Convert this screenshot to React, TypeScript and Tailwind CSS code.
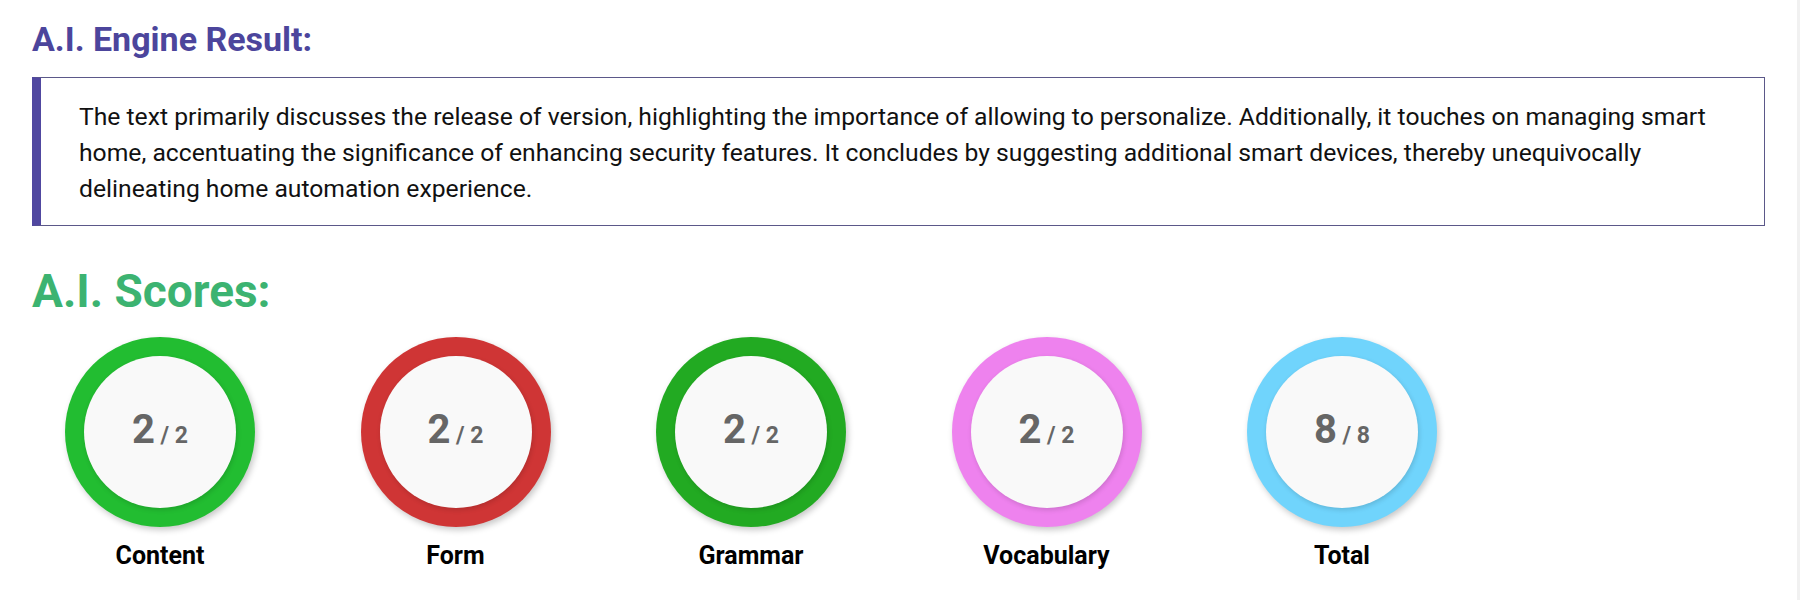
import React from 'react'

type Score = {
    label: string
    value: number
    max: number
    ring: string
}

const scores: Score[] = [
    { label: 'Content', value: 2, max: 2, ring: 'bg-[#22bd31]' },
    { label: 'Form', value: 2, max: 2, ring: 'bg-[#cf3535]' },
    { label: 'Grammar', value: 2, max: 2, ring: 'bg-[#22aa22]' },
    { label: 'Vocabulary', value: 2, max: 2, ring: 'bg-[#ee82ee]' },
    { label: 'Total', value: 8, max: 8, ring: 'bg-[#70d4fc]' },
]

function ScoreRing({ s }: { s: Score }) {
    return (
        <div className="flex flex-col items-center w-[190px]">
            <div className={`w-[190px] h-[190px] rounded-full ${s.ring} flex items-center justify-center shadow-[2px_3px_6px_rgba(0,0,0,0.22)]`}>
                <div className="w-[152px] h-[152px] rounded-full bg-[#f9f9f9] flex items-center justify-center shadow-[1px_2px_5px_rgba(0,0,0,0.14)]">
                    <span className="text-[40px] leading-[40px] font-bold text-[#666666] translate-y-[1px]">
                        {s.value}
                        <span className="text-[23px]"> / {s.max}</span>
                    </span>
                </div>
            </div>
            <div className="mt-[15px] text-[25px] leading-[28px] font-bold text-black whitespace-nowrap">{s.label}</div>
        </div>
    )
}

export default function App() {
    return (
        <div className="w-[1800px] h-[600px] bg-white flex font-['Roboto',sans-serif] overflow-hidden">
            <div className="flex-1 pl-[32px] pr-[32px] pt-[20px]">
                <h2 className="text-[34px] leading-[38px] font-bold text-[#4c459c]">A.I. Engine Result:</h2>
                <div className="mt-[19px] border border-[#5b5889] border-l-[9px] border-l-[#5047a0] pl-[38px] pr-[20px] pt-[21px] pb-[18px]">
                    <p className="text-[24.7px] leading-[36px] text-[#111111] whitespace-nowrap">
                        The text primarily discusses the release of version, highlighting the importance of allowing to personalize. Additionally, it touches on managing smart
                        <br />
                        home, accentuating the significance of enhancing security features. It concludes by suggesting additional smart devices, thereby unequivocally
                        <br />
                        delineating home automation experience.
                    </p>
                </div>
                <h2 className="mt-[39px] text-[46px] leading-[52px] font-bold text-[#3cb371]">A.I. Scores:</h2>
                <div className="mt-[20px] pl-[33px] flex gap-[105.5px]">
                    {scores.map((s) => (
                        <ScoreRing key={s.label} s={s} />
                    ))}
                </div>
            </div>
            <div className="w-[3px] h-full bg-[#f1f1f1]" />
        </div>
    )
}
